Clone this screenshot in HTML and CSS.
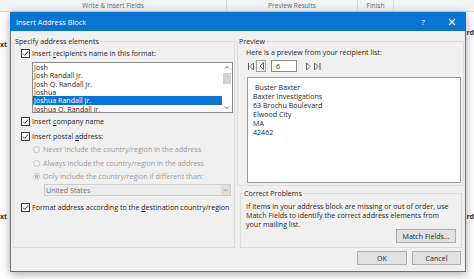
FILE: index.html
```html
<!DOCTYPE html>
<html lang="en">
<head>
    <meta charset="UTF-8">
    <title>Insert Address Block</title>
    <link rel="stylesheet" href="styles.css">
</head>
<body>

    <!-- Ribbon strip behind the dialog -->
    <div class="ribbon">
        <div class="ribbon-group write">Write &amp; Insert Fields</div>
        <div class="ribbon-group results">Preview Results</div>
        <div class="ribbon-group finish">Finish</div>
    </div>

    <!-- Document edges peeking out -->
    <div class="doc">
        <div class="doc-col left">
            <span class="peek top">xt</span>
            <span class="peek bottom">xt</span>
        </div>
        <div class="doc-col right">
            <span class="peek top">rd</span>
            <span class="peek bottom">rd</span>
        </div>
    </div>

    <!-- Dialog -->
    <div class="dialog">
        <div class="titlebar">
            <span class="title">Insert Address Block</span>
            <span class="help">?</span>
            <svg class="close" width="8" height="8" viewBox="0 0 8 8"><path d="M1 1l6 6M7 1l-6 6" stroke="#fff" stroke-width="1.1"/></svg>
        </div>

        <div class="dialog-body">
            <!-- Left: address elements -->
            <fieldset class="group-box elements">
                <legend>Specify address elements</legend>

                <div class="row first">
                    <svg class="cb" width="9" height="9" viewBox="0 0 9 9"><rect x=".5" y=".5" width="8" height="8" fill="#fff" stroke="#3a3a3a"/><path d="M2 4.6l1.8 1.8 3.3-4" fill="none" stroke="#3a3a3a"/></svg>
                    <span>Insert <u>r</u>ecipient's name in this format:</span>
                </div>

                <div class="listbox">
                    <ul>
                        <li>Josh</li>
                        <li>Josh Randall Jr.</li>
                        <li>Josh Q. Randall Jr.</li>
                        <li>Joshua</li>
                        <li class="selected">Joshua Randall Jr.</li>
                        <li>Joshua Q. Randall Jr.</li>
                    </ul>
                    <div class="scrollbar">
                        <svg class="arrow" width="10" height="9" viewBox="0 0 10 9"><path d="M3 5.5l2-2 2 2" fill="none" stroke="#606060"/></svg>
                        <div class="thumb"></div>
                        <svg class="arrow down" width="10" height="9" viewBox="0 0 10 9"><path d="M3 3.5l2 2 2-2" fill="none" stroke="#606060"/></svg>
                    </div>
                </div>

                <div class="row company">
                    <svg class="cb" width="9" height="9" viewBox="0 0 9 9"><rect x=".5" y=".5" width="8" height="8" fill="#fff" stroke="#3a3a3a"/><path d="M2 4.6l1.8 1.8 3.3-4" fill="none" stroke="#3a3a3a"/></svg>
                    <span>Insert <u>c</u>ompany name</span>
                </div>

                <div class="row postal">
                    <svg class="cb" width="9" height="9" viewBox="0 0 9 9"><rect x=".5" y=".5" width="8" height="8" fill="#fff" stroke="#3a3a3a"/><path d="M2 4.6l1.8 1.8 3.3-4" fill="none" stroke="#3a3a3a"/></svg>
                    <span>Insert postal <u>a</u>ddress:</span>
                </div>

                <div class="row radio-row r1">
                    <span class="radio"></span>
                    <span>Never include the country/region in the address</span>
                </div>
                <div class="row radio-row r2">
                    <span class="radio"></span>
                    <span>Always include the country/region in the address</span>
                </div>
                <div class="row radio-row r3">
                    <span class="radio checked"></span>
                    <span>Only include the country/region if different than:</span>
                </div>

                <div class="combo">
                    <span class="combo-text">United States</span>
                    <span class="combo-arrow">
                        <svg width="9" height="10" viewBox="0 0 9 10"><path d="M2.5 4l2 2 2-2" fill="none" stroke="#a0a0a0"/></svg>
                    </span>
                </div>

                <div class="row format">
                    <svg class="cb" width="9" height="9" viewBox="0 0 9 9"><rect x=".5" y=".5" width="8" height="8" fill="#fff" stroke="#3a3a3a"/><path d="M2 4.6l1.8 1.8 3.3-4" fill="none" stroke="#3a3a3a"/></svg>
                    <span>Format address according to the <u>d</u>estination country/region</span>
                </div>
            </fieldset>

            <!-- Right: preview and problems -->
            <div class="right-col">
                <fieldset class="group-box preview">
                    <legend>Preview</legend>
                    <p class="intro">Here is a preview from your recipient list:</p>

                    <div class="nav">
                        <svg class="nav-first" width="6" height="9" viewBox="0 0 6 9"><path d="M.5 1v7" stroke="#555"/><path d="M5.5 1L2 4.5 5.5 8z" fill="none" stroke="#555" stroke-width=".9"/></svg>
                        <span class="nav-prev">
                            <svg width="5" height="8" viewBox="0 0 5 8"><path d="M4.5 .5L1 4l3.5 3.5z" fill="none" stroke="#555" stroke-width=".9"/></svg>
                        </span>
                        <span class="nav-input">6</span>
                        <svg class="nav-next" width="6" height="9" viewBox="0 0 6 9"><path d="M.5 1L4 4.5 .5 8z" fill="none" stroke="#555" stroke-width=".9"/></svg>
                        <svg class="nav-last" width="7" height="9" viewBox="0 0 7 9"><path d="M.5 1L4 4.5 .5 8z" fill="none" stroke="#555" stroke-width=".9"/><path d="M6 1v7" stroke="#555"/></svg>
                    </div>

                    <div class="preview-box">
                        <p class="indent">Buster Baxter</p>
                        <p>Baxter Investigations</p>
                        <p>63 Brochu Boulevard</p>
                        <p>Elwood City</p>
                        <p>MA</p>
                        <p>42462</p>
                    </div>
                </fieldset>

                <fieldset class="group-box problems">
                    <legend>Correct Problems</legend>
                    <p class="problems-text">If items in your address block are missing or out of order, use<br>Match Fields to identify the correct address elements from<br>your mailing list.</p>
                    <button class="btn match">Match Fields...</button>
                </fieldset>

                <div class="actions">
                    <button class="btn ok">OK</button>
                    <button class="btn cancel">Cancel</button>
                </div>
            </div>
        </div>
    </div>

</body>
</html>
```

FILE: styles.css
```css
/* Reset */
* {
    margin: 0;
    padding: 0;
    box-sizing: border-box;
}

body {
    width: 474px;
    height: 279px;
    overflow: hidden;
    position: relative;
    background: #fff;
    font-family: "Open Sans", "Noto Sans", sans-serif;
    font-size: 7.1px;
    color: #1e1e1e;
}

/* Ribbon strip */
.ribbon {
    display: flex;
    height: 12px;
    background: #f3f3f3;
    border-bottom: 1px solid #d6d6d6;
    color: #666;
    font-size: 6.6px;
    line-height: 11px;
}

.ribbon-group {
    text-align: center;
    border-right: 1px solid #dadada;
}

.ribbon-group.write { width: 227px; }
.ribbon-group.results { width: 131px; }
.ribbon-group.finish { width: 36px; }

/* Document behind */
.doc {
    display: flex;
    justify-content: space-between;
}

.doc-col {
    display: flex;
    flex-direction: column;
    font-size: 7px;
    line-height: 10px;
    font-weight: 700;
    color: #333;
}

.peek.top { margin-top: 28px; }
.peek.bottom { margin-top: 162px; }
.doc-col.right .peek.top { margin-top: 16px; }
.doc-col.right .peek.bottom { margin-top: 174px; }

/* Dialog window */
.dialog {
    position: absolute;
    left: 10px;
    top: 12px;
    width: 456px;
    height: 260px;
    background: #f0f0f0;
    border: 1px solid #6e6e6e;
    border-top: none;
    box-shadow: 0 2px 9px rgba(0, 0, 0, 0.35);
}

.titlebar {
    display: flex;
    align-items: center;
    height: 19px;
    margin: 0 -1px;
    padding: 0 10px 0 6px;
    background: #0a74d3;
    color: #fff;
    font-size: 7.4px;
}

.help {
    margin-left: auto;
    width: 10px;
    text-align: center;
    font-size: 8px;
}

.close {
    margin-left: 20px;
}

.dialog-body {
    display: grid;
    grid-template-columns: 222px 227px;
    column-gap: 2px;
    padding: 5px 0 0 2px;
}

/* Group boxes */
.group-box {
    border: 1px solid #dcdcdc;
    min-width: 0;
}

.group-box legend {
    padding: 0 1px;
    line-height: 10px;
}

.elements {
    height: 212px;
    align-self: start;
}

/* Checkbox and radio rows */
.row {
    display: flex;
    align-items: center;
    gap: 2px;
    height: 10px;
    padding-left: 7px;
}

.row.first { margin-top: 2px; }
.row.company { margin-top: 3px; }
.row.postal { margin-top: 5px; }
.row.format { margin-top: 6px; }

.radio-row {
    gap: 3px;
    padding-left: 19px;
    color: #9a9a9a;
}

.r1 { margin-top: 3px; }
.r2 { margin-top: 4px; }
.r3 { margin-top: 3px; }

.radio {
    width: 7px;
    height: 7px;
    border: 1px solid #c4c4c4;
    border-radius: 50%;
    background: #f5f5f5;
}

.radio.checked {
    background: radial-gradient(circle, #b0b0b0 1.4px, #f5f5f5 1.9px);
}

/* Name format list */
.listbox {
    display: flex;
    width: 201px;
    height: 51px;
    margin: 4px 0 0 18px;
    border: 1px solid #8a8a8a;
    background: #fff;
    overflow: hidden;
}

.listbox ul {
    flex: 1;
    list-style: none;
}

.listbox li {
    height: 8.33px;
    line-height: 8.33px;
    padding-left: 1px;
    white-space: nowrap;
}

.listbox li.selected {
    background: #0a74da;
    color: #fff;
}

.scrollbar {
    display: flex;
    flex-direction: column;
    width: 10px;
    background: #fff;
}

.thumb {
    height: 11px;
    margin: 1px 1px 0;
    background: #d2d2d2;
}

.arrow.down {
    margin-top: auto;
}

/* Country combo */
.combo {
    display: flex;
    width: 187px;
    height: 12px;
    margin: 3px 0 0 30px;
    border: 1px solid #cdcdcd;
    background: #ececec;
    color: #707070;
}

.combo-text {
    flex: 1;
    padding-left: 1px;
    line-height: 10px;
}

.combo-arrow {
    display: flex;
    width: 9px;
    background: #dedede;
}

/* Preview group */
.preview {
    padding-bottom: 2px;
}

.intro {
    margin-top: 1px;
    padding-left: 8px;
    line-height: 10px;
}

.nav {
    display: flex;
    align-items: center;
    height: 12px;
    margin-top: 3px;
    padding-left: 10px;
}

.nav-first { margin-right: 2px; }

.nav-prev {
    display: flex;
    align-items: center;
    justify-content: center;
    width: 10px;
    height: 12px;
    margin-right: 5px;
    border: 1px solid #a0a0a0;
}

.nav-input {
    width: 26px;
    height: 12px;
    margin-right: 9px;
    padding-left: 4px;
    border: 1px solid #8a8a8a;
    background: #fff;
    line-height: 10px;
}

.nav-next { margin-right: 2px; }

.preview-box {
    width: 214px;
    height: 106px;
    margin: 5px 0 0 9px;
    padding: 5px 0 0 5px;
    border: 1px solid #9a9a9a;
    background: #fff;
    line-height: 9.1px;
}

.preview-box .indent {
    padding-left: 2px;
}

/* Correct problems group */
.problems {
    display: flex;
    flex-direction: column;
    width: 222px;
    margin: 2px 0 0 3px;
    padding-bottom: 4px;
}

.problems legend {
    margin-left: 2px;
}

.problems-text {
    margin-top: 3.5px;
    padding-left: 5px;
    line-height: 9px;
}

/* Buttons */
.btn {
    height: 14px;
    border: 1px solid #adadad;
    background: #e1e1e1;
    font-family: inherit;
    font-size: 7.1px;
    color: #1e1e1e;
}

.match {
    align-self: flex-end;
    width: 60px;
    margin: 0.5px 5px 0 0;
}

.actions {
    display: flex;
    justify-content: flex-end;
    gap: 5px;
    margin-top: 3px;
    padding-right: 3px;
}

.ok { width: 50px; }
.cancel { width: 49px; }
```
